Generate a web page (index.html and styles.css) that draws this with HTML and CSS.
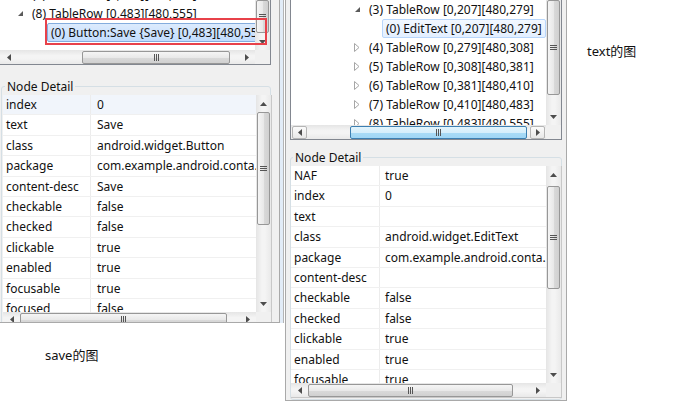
FILE: index.html
```html
<!DOCTYPE html>
<html>
<head>
<meta charset="utf-8">
<link rel="stylesheet" href="styles.css">
</head>
<body>
<div class="col-left">
  <div class="win win-left">
    <div class="tree tree-left">
      <div class="view">
        <div class="rows rows-left">
          <div class="trow ind-l0"><span class="tw"></span><span class="tlabel">(7) TableRow [0,410][480,483]</span></div>
          <div class="trow ind-l0"><span class="tw"><svg width="7" height="7" viewBox="0 0 7 7"><path d="M6 1 L6 6 L1 6 Z" fill="#5a5a5a"/></svg></span><span class="tlabel">(8) TableRow [0,483][480,555]</span></div>
          <div class="trow ind-l1"><span class="sel sel-focus">(0) Button:Save {Save} [0,483][480,555]</span></div>
        </div>
      </div>
      <div class="vbar">
        <div class="vthumb" style="height:33px"><span class="vgrip"></span></div>
        <div class="vspace"></div>
        <div class="varrow"><svg width="7" height="4" viewBox="0 0 7 4"><path d="M0 0 L7 0 L3.5 4 Z" fill="#4d4d4d"/></svg></div>
      </div>
      <div class="hbar">
        <div class="harrow"><svg width="4" height="7" viewBox="0 0 4 7"><path d="M4 0 L4 7 L0 3.5 Z" fill="#4d4d4d"/></svg></div>
        <div class="hthumb" style="margin-left:65px;width:148px"><span class="hgrip"></span></div>
        <div class="hspace"></div>
        <div class="harrow"><svg width="4" height="7" viewBox="0 0 4 7"><path d="M0 0 L0 7 L4 3.5 Z" fill="#4d4d4d"/></svg></div>
      </div>
      <div class="corner"></div>
    </div>

    <fieldset class="group group-left">
      <legend>Node Detail</legend>
      <div class="table table-left">
        <div class="view">
          <div class="prow hl"><span class="k">index</span><span class="v">0</span></div>
          <div class="prow"><span class="k">text</span><span class="v">Save</span></div>
          <div class="prow"><span class="k">class</span><span class="v">android.widget.Button</span></div>
          <div class="prow"><span class="k">package</span><span class="v">com.example.android.conta.</span></div>
          <div class="prow"><span class="k">content-desc</span><span class="v">Save</span></div>
          <div class="prow"><span class="k">checkable</span><span class="v">false</span></div>
          <div class="prow"><span class="k">checked</span><span class="v">false</span></div>
          <div class="prow"><span class="k">clickable</span><span class="v">true</span></div>
          <div class="prow"><span class="k">enabled</span><span class="v">true</span></div>
          <div class="prow"><span class="k">focusable</span><span class="v">true</span></div>
          <div class="prow"><span class="k">focused</span><span class="v">false</span></div>
        </div>
        <div class="vbar">
          <div class="varrow"><svg width="7" height="4" viewBox="0 0 7 4"><path d="M0 4 L7 4 L3.5 0 Z" fill="#4d4d4d"/></svg></div>
          <div class="vthumb" style="height:113px"><span class="vgrip"></span></div>
          <div class="vspace"></div>
          <div class="varrow"><svg width="7" height="4" viewBox="0 0 7 4"><path d="M0 0 L7 0 L3.5 4 Z" fill="#4d4d4d"/></svg></div>
        </div>
        <div class="hbar">
          <div class="harrow"><svg width="4" height="7" viewBox="0 0 4 7"><path d="M4 0 L4 7 L0 3.5 Z" fill="#4d4d4d"/></svg></div>
          <div class="hthumb" style="margin-left:0;width:207px"><span class="hgrip"></span></div>
          <div class="hspace"></div>
          <div class="harrow"><svg width="4" height="7" viewBox="0 0 4 7"><path d="M0 0 L0 7 L4 3.5 Z" fill="#4d4d4d"/></svg></div>
        </div>
        <div class="corner"></div>
      </div>
    </fieldset>

    <div class="mark"></div>
  </div>
  <p class="caption caption-left">save的图</p>
</div>

<div class="win win-right">
  <div class="tree tree-right">
    <div class="view">
      <div class="rows">
        <div class="trow ind-r0"><span class="tw"><svg width="7" height="7" viewBox="0 0 7 7"><path d="M6 1 L6 6 L1 6 Z" fill="#5a5a5a"/></svg></span><span class="tlabel">(3) TableRow [0,207][480,279]</span></div>
        <div class="trow ind-r1"><span class="sel sel-blur">(0) EditText [0,207][480,279]</span></div>
        <div class="trow ind-r0"><span class="tw"><svg width="6" height="9" viewBox="0 0 6 9"><path d="M0.5 0.5 L5 4.5 L0.5 8.5 Z" fill="#fff" stroke="#a6a6a6"/></svg></span><span class="tlabel">(4) TableRow [0,279][480,308]</span></div>
        <div class="trow ind-r0"><span class="tw"><svg width="6" height="9" viewBox="0 0 6 9"><path d="M0.5 0.5 L5 4.5 L0.5 8.5 Z" fill="#fff" stroke="#a6a6a6"/></svg></span><span class="tlabel">(5) TableRow [0,308][480,381]</span></div>
        <div class="trow ind-r0"><span class="tw"><svg width="6" height="9" viewBox="0 0 6 9"><path d="M0.5 0.5 L5 4.5 L0.5 8.5 Z" fill="#fff" stroke="#a6a6a6"/></svg></span><span class="tlabel">(6) TableRow [0,381][480,410]</span></div>
        <div class="trow ind-r0"><span class="tw"><svg width="6" height="9" viewBox="0 0 6 9"><path d="M0.5 0.5 L5 4.5 L0.5 8.5 Z" fill="#fff" stroke="#a6a6a6"/></svg></span><span class="tlabel">(7) TableRow [0,410][480,483]</span></div>
        <div class="trow ind-r0"><span class="tw"><svg width="6" height="9" viewBox="0 0 6 9"><path d="M0.5 0.5 L5 4.5 L0.5 8.5 Z" fill="#fff" stroke="#a6a6a6"/></svg></span><span class="tlabel">(8) TableRow [0,483][480,555]</span></div>
      </div>
    </div>
    <div class="vbar">
      <div class="vthumb" style="height:95px"><span class="vgrip"></span></div>
      <div class="vspace"></div>
      <div class="varrow"><svg width="7" height="4" viewBox="0 0 7 4"><path d="M0 0 L7 0 L3.5 4 Z" fill="#4d4d4d"/></svg></div>
    </div>
    <div class="hbar hbar-hot">
      <div class="harrow boxed"><svg width="4" height="7" viewBox="0 0 4 7"><path d="M4 0 L4 7 L0 3.5 Z" fill="#4d4d4d"/></svg></div>
      <div class="hthumb" style="margin-left:42px;width:177px"><span class="hgrip"></span></div>
      <div class="hspace"></div>
      <div class="harrow boxed"><svg width="4" height="7" viewBox="0 0 4 7"><path d="M0 0 L0 7 L4 3.5 Z" fill="#4d4d4d"/></svg></div>
    </div>
    <div class="corner"></div>
  </div>

  <fieldset class="group group-right">
    <legend>Node Detail</legend>
    <div class="table table-right">
      <div class="view">
        <div class="prow"><span class="k">NAF</span><span class="v">true</span></div>
        <div class="prow"><span class="k">index</span><span class="v">0</span></div>
        <div class="prow"><span class="k">text</span><span class="v"></span></div>
        <div class="prow"><span class="k">class</span><span class="v">android.widget.EditText</span></div>
        <div class="prow"><span class="k">package</span><span class="v">com.example.android.conta.</span></div>
        <div class="prow"><span class="k">content-desc</span><span class="v"></span></div>
        <div class="prow"><span class="k">checkable</span><span class="v">false</span></div>
        <div class="prow"><span class="k">checked</span><span class="v">false</span></div>
        <div class="prow"><span class="k">clickable</span><span class="v">true</span></div>
        <div class="prow"><span class="k">enabled</span><span class="v">true</span></div>
        <div class="prow"><span class="k">focusable</span><span class="v">true</span></div>
      </div>
      <div class="vbar">
        <div class="varrow"><svg width="7" height="4" viewBox="0 0 7 4"><path d="M0 4 L7 4 L3.5 0 Z" fill="#4d4d4d"/></svg></div>
        <div class="vthumb" style="margin-top:3px;height:103px"><span class="vgrip"></span></div>
        <div class="vspace"></div>
        <div class="varrow"><svg width="7" height="4" viewBox="0 0 7 4"><path d="M0 0 L7 0 L3.5 4 Z" fill="#4d4d4d"/></svg></div>
      </div>
      <div class="hbar">
        <div class="harrow"><svg width="4" height="7" viewBox="0 0 4 7"><path d="M4 0 L4 7 L0 3.5 Z" fill="#4d4d4d"/></svg></div>
        <div class="hthumb" style="margin-left:0;width:205px"><span class="hgrip"></span></div>
        <div class="hspace"></div>
        <div class="harrow"><svg width="4" height="7" viewBox="0 0 4 7"><path d="M0 0 L0 7 L4 3.5 Z" fill="#4d4d4d"/></svg></div>
      </div>
      <div class="corner"></div>
    </div>
  </fieldset>
</div>

<p class="caption caption-right">text的图</p>
</body>
</html>
```

FILE: styles.css
```css
* { box-sizing: border-box; }
html, body { margin: 0; padding: 0; }
body {
  width: 680px;
  height: 408px;
  overflow: hidden;
  background: #fff;
  display: flex;
  align-items: flex-start;
  font-family: "Noto Sans", "Noto Sans CJK SC", sans-serif;
  font-size: 12px;
  color: #111;
}

.col-left { width: 280px; display: flex; flex-direction: column; }

.win {
  background: #f0f0f0;
  overflow: hidden;
  display: flex;
  flex-direction: column;
  position: relative;
}
.win-left {
  height: 323px;
  border-right: 1px solid #a9a9a9;
  border-bottom: 1px solid #a9a9a9;
  padding-right: 8px;
  box-shadow: 3px 0 0 #e2ecf7, 4px 0 0 #b4b4b4;
}
.win-right {
  width: 282px;
  height: 401px;
  margin-left: 5px;
  border: 1px solid #a9a9a9;
  border-top: none;
  padding: 0 4px 0 4px;
}

/* tree */
.tree {
  background: #fff;
  border: 1px solid #828790;
  border-top: none;
  display: grid;
  grid-template-columns: 1fr 15px;
  grid-template-rows: 1fr 14px;
  overflow: hidden;
  flex: none;
}
.tree-left { height: 65px; border-left: none; }
.tree-right { height: 140px; }

.view { overflow: hidden; min-width: 0; min-height: 0; }
.rows-left { margin-top: -15px; }

.trow {
  height: 19px;
  display: flex;
  align-items: center;
  white-space: nowrap;
}
.tw {
  width: 10px;
  height: 19px;
  margin-right: 7px;
  display: flex;
  align-items: center;
  justify-content: center;
  flex: none;
}
.ind-l0 { padding-left: 15px; }
.ind-l1 { padding-left: 47px; }
.ind-r0 { padding-left: 61px; }
.ind-r1 { padding-left: 91px; }

.sel {
  height: 19px;
  line-height: 17px;
  padding: 0 3px;
  border-radius: 2px;
  white-space: nowrap;
  flex: none;
}
.sel-focus {
  background: linear-gradient(#dcebfd, #c2dcfd);
  border: 1px solid #84acdd;
  min-width: 230px;
}
.sel-blur {
  background: linear-gradient(#f2f8ff, #e3efff);
  border: 1px solid #b8d6fb;
}

/* scrollbars */
.vbar {
  background: linear-gradient(to right, #e5e5e5, #f4f4f4 40%, #f4f4f4 60%, #e9e9e9);
  display: flex;
  flex-direction: column;
  align-items: center;
  min-height: 0;
  overflow: hidden;
}
.hbar {
  background: linear-gradient(#e5e5e5, #f4f4f4 40%, #f4f4f4 60%, #e9e9e9);
  display: flex;
  align-items: center;
  min-width: 0;
  overflow: hidden;
}
.corner { background: #f0f0f0; }
.varrow {
  width: 15px;
  height: 17px;
  flex: none;
  display: flex;
  align-items: center;
  justify-content: center;
}
.harrow {
  width: 17px;
  height: 14px;
  flex: none;
  display: flex;
  align-items: center;
  justify-content: center;
}
.harrow.boxed {
  width: 15px;
  height: 13px;
  margin: 0 1px;
  border: 1px solid #b5b5b5;
  border-radius: 2px;
  background: linear-gradient(#fbfbfb, #e8e8e8);
}
.vspace, .hspace { flex: 1; }
.vthumb {
  width: 13px;
  flex: none;
  border: 1px solid #979797;
  border-radius: 2px;
  background: linear-gradient(to right, #f5f5f5, #e9e9e9 50%, #dadada 51%, #d0d0d0);
  display: flex;
  align-items: center;
  justify-content: center;
}
.hthumb {
  height: 13px;
  flex: none;
  border: 1px solid #979797;
  border-radius: 2px;
  background: linear-gradient(#f5f5f5, #e9e9e9 50%, #dadada 51%, #d0d0d0);
  display: flex;
  align-items: center;
  justify-content: center;
}
.hbar-hot .hthumb {
  border-color: #3c7fb1;
  background: linear-gradient(#e3f4fc, #d6eefb 50%, #a9dbf6 51%, #a0d6f5);
}
.vgrip {
  width: 7px;
  height: 5px;
  background: repeating-linear-gradient(#555 0 1px, transparent 1px 2px);
}
.hgrip {
  width: 5px;
  height: 7px;
  background: repeating-linear-gradient(to right, #555 0 1px, transparent 1px 2px);
}

/* group */
.group {
  margin: 13px 0 0 1px;
  padding: 0 0 0 1px;
  border: 1px solid #d5dfe5;
  border-radius: 3px;
  min-width: 0;
  flex: 1;
  display: flex;
  flex-direction: column;
}
.group legend {
  padding: 0 2px;
  margin-left: 2px;
  line-height: 17px;
  height: 17px;
}
.group-right { margin: 9px 0 0 0; padding: 0; }

.table {
  background: #fff;
  display: grid;
  grid-template-columns: 1fr 15px;
  grid-template-rows: 1fr 14px;
  border-right: 1px solid #c8c8c8;
  overflow: hidden;
  flex: none;
}
.table-left { height: 231px; width: 269px; }
.table-right { height: 232px; width: 271px; border-bottom: 1px solid #c8c8c8; }

.prow {
  display: grid;
  grid-template-columns: 88px 1fr;
  height: 20.4px;
  border-bottom: 1px solid #f0f0f0;
  white-space: nowrap;
}
.prow.hl { background: #f1f5fb; }
.k {
  padding-left: 3px;
  border-right: 1px solid #ececec;
  line-height: 19px;
  overflow: hidden;
}
.v {
  padding-left: 6px;
  line-height: 19px;
  overflow: hidden;
}
.table-right .prow { grid-template-columns: 89px 1fr; }
.table-right .v { padding-left: 5px; }

/* annotation */
.mark {
  position: absolute;
  left: 45px;
  top: 18px;
  width: 222px;
  height: 27px;
  border: 2px solid #e8414a;
  pointer-events: none;
}

.caption {
  margin: 0;
  font-size: 13px;
  line-height: 18px;
  color: #111;
}
.caption-left { margin: 23px 0 0 45px; }
.caption-right { margin: 42px 0 0 20px; }
```
